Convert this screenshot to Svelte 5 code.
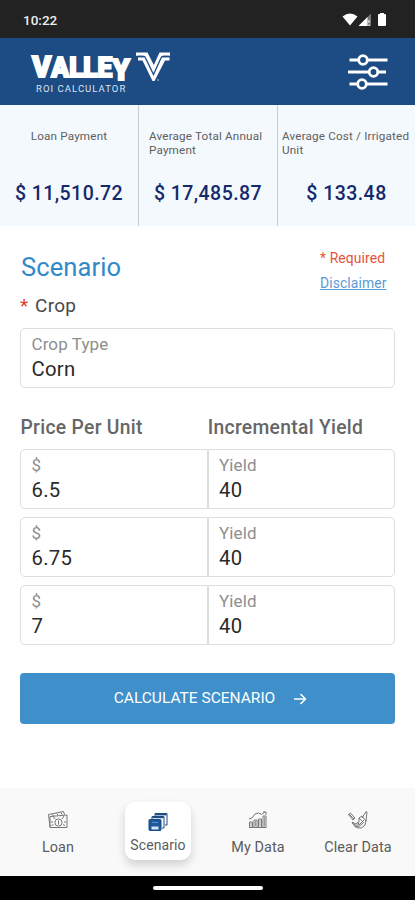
<script lang="ts">
  let stats = $state([
    { label: 'Loan Payment', value: '$ 11,510.72' },
    { label: 'Average Total Annual Payment', value: '$ 17,485.87' },
    { label: 'Average Cost / Irrigated Unit', value: '$ 133.48' }
  ]);

  let crop = $state('Corn');
  let rows = $state([
    { price: '6.5', yield: '40' },
    { price: '6.75', yield: '40' },
    { price: '7', yield: '40' }
  ]);

  const tabs = [
    { id: 'loan', label: 'Loan' },
    { id: 'scenario', label: 'Scenario' },
    { id: 'data', label: 'My Data' },
    { id: 'clear', label: 'Clear Data' }
  ];
  let active = $state('scenario');
</script>

<div class="phone">
  <!-- system bar -->
  <div class="status">
    <span class="time">10:22</span>
    <svg class="signals" width="48" height="18" viewBox="0 0 48 18">
      <path d="M1.5 5.500Q9 -.5 16.500 5.500L9 14.500Z" fill="#fff" />
      <path d="M17.500 15L30 2.500V15Z" fill="#777" />
      <path d="M17.500 15L26.500 6V15Z" fill="#fff" />
      <path d="M28 9v3M28 13.500v1.500" stroke="#ddd" stroke-width="1.500" />
      <path d="M38 3h1V2h4v1h1q1 0 1 1v10q0 1-1 1h-6q-1 0-1-1V4q0-1 1-1Z" fill="#fff" />
    </svg>
  </div>

  <header>
    <div class="brand">
      <svg class="logo" width="142" height="34" viewBox="0 0 142 34">
        <text class="wordmark" x="2" y="27" textLength="98" lengthAdjust="spacingAndGlyphs"><tspan
          font-size="30">V</tspan><tspan font-size="27">ALLE</tspan><tspan font-size="29" dy="3">Y</tspan></text>
        <!-- emblem -->
        <path d="M106 2.500H117.500L123.800 15L129.500 2.500H140V5.800H133L132 7.200H139.500V10.600H135L124.500 31H122.500L112.500 10.600H108V7.200H114L113 5.800H106Z" fill="#fff" />
        <path d="M108 6.500h6q1 0 1.500 1.500l8 16.500L131 8q.5-1.500 2-1.500h6" fill="none" stroke="#1d4b84" stroke-width="1.300" />
        <circle cx="128" cy="30" r=".8" fill="#c9d6e8" />
      </svg>
      <span class="sub">ROI CALCULATOR</span>
    </div>
    <button class="filter" aria-label="Settings">
      <svg width="42" height="38" viewBox="0 0 42 38" fill="none" stroke="#fff" stroke-width="2.800">
        <path d="M2.500 7h38M1 19h38M2.500 31h38" />
        <circle cx="16" cy="7" r="4.300" fill="#1d4b84" />
        <circle cx="26.500" cy="19" r="4.300" fill="#1d4b84" />
        <circle cx="15" cy="31" r="4.300" fill="#1d4b84" />
      </svg>
    </button>
  </header>

  <section class="stats">
    {#each stats as s}
      <div class="stat">
        <div class="stat-label"><span>{s.label}</span></div>
        <div class="stat-value">{s.value}</div>
      </div>
    {/each}
  </section>

  <main>
    <div class="heading">
      <div>
        <h1>Scenario</h1>
        <h2><span class="star">*</span> Crop</h2>
      </div>
      <div class="notes">
        <span class="required">* Required</span>
        <a href="#disclaimer">Disclaimer</a>
      </div>
    </div>

    <label class="field crop">
      <span>Crop Type</span>
      <input bind:value={crop} />
    </label>

    <div class="columns">
      <span>Price Per Unit</span>
      <span>Incremental Yield</span>
    </div>

    <div class="rows">
      {#each rows as row}
        <div class="row">
          <label class="field">
            <span>$</span>
            <input bind:value={row.price} />
          </label>
          <label class="field">
            <span>Yield</span>
            <input bind:value={row.yield} />
          </label>
        </div>
      {/each}
    </div>

    <button class="calc">
      <span>CALCULATE SCENARIO</span>
      <svg width="14" height="14" viewBox="0 0 14 14" fill="none" stroke="#fff" stroke-width="1.500">
        <path d="M1 8h11.500M7.500 3l5 5-5 5" />
      </svg>
    </button>
  </main>

  <nav>
    {#each tabs as tab (tab.id)}
      <button class="tab" class:active={active === tab.id} onclick={() => (active = tab.id)}>
        <svg width="22" height="20" viewBox="0 0 22 20" fill="none" stroke="#777" stroke-width="1">
          {#if tab.id === 'loan'}
            <path d="M3 17L1.500 4.500L16.500 1.500l1 3" />
            <path d="M3 6.500L20 5v12.500H3z" />
            <circle cx="11.500" cy="12.500" r="3.600" />
            <path d="M8 9L6 6M15 9l2-3M11.500 10.500v4M4.500 15.500l2-1M18 15.500l-2-1M5 4.500l2 1.500M10 3.500l1 1.500M14 2.500l1 2M5 11v2M18 11v2" />
          {:else if tab.id === 'scenario'}
            <path d="M8 4V1.500h12V13h-2" stroke="#1d4b84" fill="#fff" />
            <path d="M8.500 2.500h11" stroke="#1d4b84" stroke-width="1.800" />
            <path d="M5 7V4.500h12V16h-2" stroke="#1d4b84" fill="#fff" />
            <path d="M5.500 5.300h11" stroke="#1d4b84" stroke-width="1.800" />
            <rect x="2" y="7.500" width="12" height="11" rx="1" fill="#1b5799" stroke="#174a87" />
            <rect x="4.500" y="14.500" width="7" height="3" fill="#d5e3f2" stroke="none" />
            <path d="M5 10.500h6" stroke="#5f90c5" />
          {:else if tab.id === 'data'}
            <path d="M2 17.500h17.500M2.500 17v-5h3v5M7 17v-7h3v7M11.500 17V9h3v8M16 17V6h3v11" />
            <path d="M4 12.500v4M8.500 11v5.500M13 10v6.500M17.500 7v9.500" stroke="#999" />
            <path d="M2 9l3-1 3-4 3.500-1 3 1.500 3.500-2.500M16 2h3v3" />
          {:else}
            <path d="M2 4l5 5M1.500 4.500l2-1.500 4.500 5-2 2z" />
            <path d="M19.500 1L15 8M20 2l-1 9" />
            <path d="M12 8l3-2 4 5-1 4q-3 4-7 3-4-1-6-6l4 2 3-2z" />
            <path d="M5 13q4 4 8 1l4-4M8 17q4 1 8-4M12 8l5 5M10 12l3 3" />
          {/if}
        </svg>
        <span>{tab.label}</span>
      </button>
    {/each}
  </nav>

  <div class="gesture"><i></i></div>
</div>

<style>
:global(body){margin:0;background:#fff}
.phone{width:415px;height:900px;display:flex;flex-direction:column;background:#fff;overflow:hidden;
  font-family:Roboto,"Liberation Sans",sans-serif;color:#484848}
button{border:none;background:none;padding:0;font-family:inherit;cursor:pointer}
h1,h2{margin:0;font-weight:400}

.status{flex:none;height:38px;box-sizing:border-box;background:#222;display:flex;align-items:center;
  justify-content:space-between;padding:1px 26px 0 23px}
.time{color:#eee;font-size:13.5px;font-weight:500}

header{flex:none;height:67px;background:#1d4b84;display:flex;justify-content:space-between;padding:0 26px 0 30px}
.brand{display:flex;flex-direction:column;padding-top:12px}
.logo{overflow:visible}
.wordmark{font-family:Roboto,sans-serif;font-weight:900;fill:#fff;stroke:#fff;stroke-width:1.9}
.sub{color:#dbe5f1;font-size:9.5px;line-height:12px;letter-spacing:1.05px;margin:-1px 0 0 6px;white-space:nowrap}
.filter{align-self:flex-start;margin-top:15px;height:38px}

.stats{flex:none;height:121px;display:grid;grid-template-columns:138px 139px 138px;background:#f4f9fe}
.stat{box-sizing:border-box;padding-top:24px}
.stat + .stat{border-left:1px solid #c5ced8}
.stat-label{height:50px;display:flex;justify-content:center;font-size:11.7px;line-height:14px;
  letter-spacing:.17px;color:#606060}
.stat:nth-child(2) .stat-label{padding:0 10px}
.stat:nth-child(3) .stat-label{padding:0 0 0 4px}
.stat-value{text-align:center;font-size:19.5px;line-height:30px;font-weight:500;color:#15296b;letter-spacing:.45px}

main{flex:1;padding:26px 20px 0}
.heading{display:flex;justify-content:space-between;height:76px}
h1{font-size:25.5px;line-height:31px;color:#3089c9;letter-spacing:.1px;padding-left:1px}
h2{font-size:19px;line-height:24px;margin-top:11px;letter-spacing:.3px}
.star{color:#e23a30;margin-right:1.5px}
.notes{display:flex;flex-direction:column;width:75px;font-size:13.9px;line-height:25px;
  margin-top:-6px;letter-spacing:.1px;white-space:nowrap}
.required{color:#e5533d}
.notes a{color:#5b9bd2}

.field{display:flex;flex-direction:column;box-sizing:border-box;height:60px;padding:5px 10px 0 10.5px;
  border:1.5px solid #dedede;min-width:0}
.field span{font-size:17px;line-height:20px;color:#8e8e8e;letter-spacing:.1px}
.field input{border:none;outline:none;padding:0;margin-top:1px;height:28px;width:100%;background:none;
  font:400 20.3px/28px Roboto,sans-serif;color:#2a2a2a;letter-spacing:.3px}
.crop{border-radius:5px}
.columns{display:grid;grid-template-columns:1fr 1fr;margin-top:28px;font-size:19.3px;line-height:24px;
  font-weight:500;color:#666;letter-spacing:.3px;padding-left:.5px}
.rows{display:flex;flex-direction:column;gap:8px;margin-top:9px}
.row{display:grid;grid-template-columns:1fr 1fr}
.row .field:first-child{border-radius:5px 0 0 5px}
.row .field:last-child{border-radius:0 5px 5px 0}

.calc{width:100%;height:51px;margin-top:28px;padding:0 0 1px 6px;border-radius:4px;background:#3e8fca;color:#fff;
  display:flex;align-items:center;justify-content:center;gap:18px;font-size:15.5px}

nav{flex:none;height:88px;box-sizing:border-box;background:#f9f9f9;display:flex;padding:0 7px 0 8px}
.tab{flex:1;height:58px;margin-top:14px;display:flex;flex-direction:column;align-items:center;
  padding-top:8px;box-sizing:border-box;font-size:14.4px;color:#5c5c5c;letter-spacing:.1px}
.tab span{line-height:18px;margin-top:9px;white-space:nowrap}
.tab.active{flex:none;width:66px;margin:14px 17px 0;padding-top:10px;background:#fff;border-radius:10px;
  box-shadow:0 5px 10px rgba(0,0,0,.16);font-size:14px}
.tab.active span{margin-top:4px}

.gesture{flex:none;height:24px;background:#000;display:flex;align-items:center;justify-content:center}
.gesture i{width:110px;height:4px;border-radius:2px;background:#fff}
</style>
